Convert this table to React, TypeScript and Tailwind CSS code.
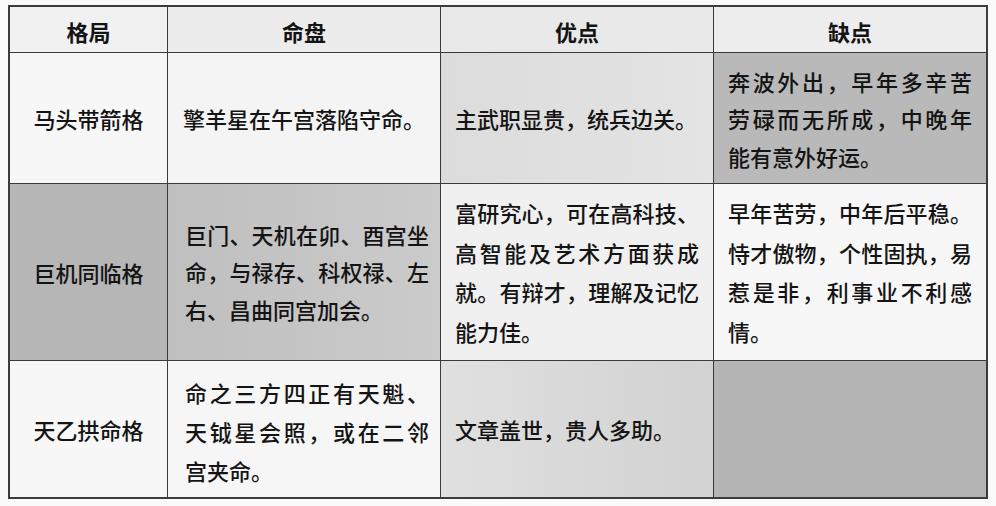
const FONT = "[font-family:'Noto_Sans_CJK_SC','Noto_Sans',sans-serif]";

function Lines({ lines, leading }: { lines: string[]; leading: string }) {
  return (
    <div className={`w-[244px] ${leading}`}>
      {lines.map((l, i) => (
        <div
          key={i}
          className={i < lines.length - 1 ? "whitespace-nowrap [text-align-last:justify]" : "whitespace-nowrap text-left"}
        >
          {l}
        </div>
      ))}
    </div>
  );
}

export default function App() {
  return (
    <div className={`w-[996px] h-[506px] bg-[#fafafa] pl-[8px] pt-[5px] text-[#141414] font-medium ${FONT}`}>
      <div className="w-[980px] border-2 border-[#3c3c3c] grid grid-cols-[158px_273px_273px_272px] grid-rows-[46px_131px_177px_136px] text-[22px]">
        {/* header */}
        <div className="border-r border-b border-[#3a3a3a] bg-[#f1f1f1] flex items-center justify-center pt-1 font-bold">格局</div>
        <div className="border-r border-b border-[#3a3a3a] bg-[#ececec] flex items-center justify-center pt-1 font-bold">命盘</div>
        <div className="border-r border-b border-[#3a3a3a] bg-[#e9e9e9] flex items-center justify-center pt-1 font-bold">优点</div>
        <div className="border-b border-[#3a3a3a] bg-[#ededed] flex items-center justify-center pt-1 font-bold">缺点</div>

        {/* row 1 */}
        <div className="border-r border-b border-[#3a3a3a] bg-[#f7f7f7] flex items-center justify-center">马头带箭格</div>
        <div className="border-r border-b border-[#3a3a3a] bg-[#f4f4f4] flex items-center pl-[15px]">
          <Lines lines={["擎羊星在午宫落陷守命。"]} leading="leading-[38px]" />
        </div>
        <div className="border-r border-b border-[#3a3a3a] bg-gradient-to-r from-[#dcdcdc] to-[#e4e4e4] flex items-center pl-[14px]">
          <Lines lines={["主武职显贵，统兵边关。"]} leading="leading-[38px]" />
        </div>
        <div className="border-b border-[#3a3a3a] bg-[#b9b9b9] flex items-center pl-[14px] pt-[2px]">
          <Lines lines={["奔波外出，早年多辛苦", "劳碌而无所成，中晚年", "能有意外好运。"]} leading="leading-[37.5px]" />
        </div>

        {/* row 2 */}
        <div className="border-r border-b border-[#3a3a3a] bg-[#b6b6b6] flex items-center justify-center">巨机同临格</div>
        <div className="border-r border-b border-[#3a3a3a] bg-gradient-to-r from-[#bfbfbf] to-[#cbcbcb] flex items-center pl-[17px]">
          <Lines lines={["巨门、天机在卯、酉宫坐", "命，与禄存、科权禄、左", "右、昌曲同宫加会。"]} leading="leading-[37.5px]" />
        </div>
        <div className="border-r border-b border-[#3a3a3a] bg-[#f0f0f0] flex items-center pl-[14px]">
          <Lines lines={["富研究心，可在高科技、", "高智能及艺术方面获成", "就。有辩才，理解及记忆", "能力佳。"]} leading="leading-[39.5px]" />
        </div>
        <div className="border-b border-[#3a3a3a] bg-[#f7f7f7] flex items-center pl-[14px]">
          <Lines lines={["早年苦劳，中年后平稳。", "恃才傲物，个性固执，易", "惹是非，利事业不利感", "情。"]} leading="leading-[39.5px]" />
        </div>

        {/* row 3 */}
        <div className="border-r border-[#3a3a3a] bg-[#f7f7f7] flex items-center justify-center">天乙拱命格</div>
        <div className="border-r border-[#3a3a3a] bg-[#f6f6f6] flex items-center pl-[17px] pt-[4px]">
          <Lines lines={["命之三方四正有天魁、", "天钺星会照，或在二邻", "宫夹命。"]} leading="leading-[39px]" />
        </div>
        <div className="border-r border-[#3a3a3a] bg-gradient-to-r from-[#e0e0e0] to-[#d2d2d2] flex items-center pl-[14px]">
          <Lines lines={["文章盖世，贵人多助。"]} leading="leading-[38px]" />
        </div>
        <div className="bg-[#b4b4b4]" />
      </div>
    </div>
  );
}
